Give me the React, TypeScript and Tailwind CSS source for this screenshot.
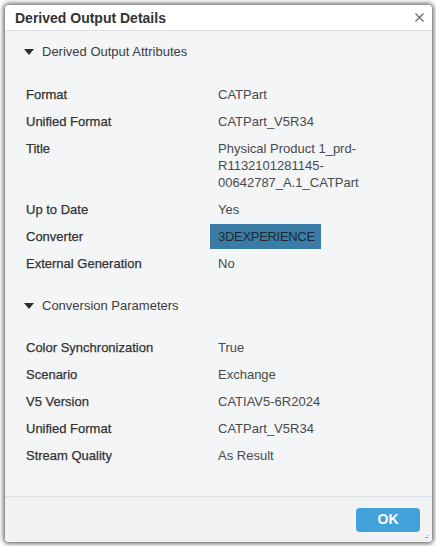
import React from "react";

type Row = { label: string; value: React.ReactNode };

const attributes: Row[] = [
  { label: "Format", value: "CATPart" },
  { label: "Unified Format", value: "CATPart_V5R34" },
  {
    label: "Title",
    value: (
      <>
        Physical Product 1_prd-
        <br />
        R1132101281145-
        <br />
        00642787_A.1_CATPart
      </>
    ),
  },
  { label: "Up to Date", value: "Yes" },
  {
    label: "Converter",
    value: (
      <span className="-ml-2 inline-block w-[111px] whitespace-nowrap bg-[#3a7ca5] py-1 pl-2 tracking-[-0.3px] text-[#1b2a36]">
        3DEXPERIENCE
      </span>
    ),
  },
  { label: "External Generation", value: "No" },
];

const parameters: Row[] = [
  { label: "Color Synchronization", value: "True" },
  { label: "Scenario", value: "Exchange" },
  { label: "V5 Version", value: "CATIAV5-6R2024" },
  { label: "Unified Format", value: "CATPart_V5R34" },
  { label: "Stream Quality", value: "As Result" },
];

function SectionHeader({ title }: { title: string }) {
  return (
    <div className="flex h-6 items-center pl-[19px] text-[13px] text-[#3d3d3d]">
      <svg width="10" height="6" viewBox="0 0 10 6" className="mr-2">
        <path d="M0 0 L10 0 L5 6 Z" fill="#2f2f2f" />
      </svg>
      {title}
    </div>
  );
}

function Rows({ rows }: { rows: Row[] }) {
  return (
    <div className="flex flex-col">
      {rows.map((r) => (
        <div key={r.label} className={`flex items-start ${r.label === "Converter" ? "py-[1px]" : "py-[5px]"} text-[13px] leading-[17px]`}>
          <div className={`w-[213px] shrink-0 pl-[21px] text-[#333] [-webkit-text-stroke:0.25px_#333] ${r.label === "Converter" ? "py-1" : ""}`}>
            {r.label}
          </div>
          <div className="text-[#4a4a4a]">{r.value}</div>
        </div>
      ))}
    </div>
  );
}

export default function App() {
  return (
    <div className="h-[546px] w-[436px] bg-white p-[5px] font-['Liberation_Sans',Arial,sans-serif]">
      <div className="relative flex h-[537px] w-[427px] flex-col overflow-hidden rounded-[4px] bg-[#f3f5f7] shadow-[0_0_4px_2px_rgba(0,0,0,0.55)]">
        <div className="flex h-[26px] shrink-0 items-center justify-between border-b border-[#dcdfe3] bg-white pl-[10px] pr-[8px]">
          <span className="pt-[1px] text-[14px] font-bold text-[#333]">Derived Output Details</span>
          <svg width="9" height="9" viewBox="0 0 9 9">
            <path d="M0.5 0.5 L8.5 8.5 M8.5 0.5 L0.5 8.5" stroke="#6f6f6f" strokeWidth="1.4" />
          </svg>
        </div>
        <div className="flex-1 pt-[9px]">
          <SectionHeader title="Derived Output Attributes" />
          <div className="mt-[17px]">
            <Rows rows={attributes} />
          </div>
          <div className="mt-[17px]">
            <SectionHeader title="Conversion Parameters" />
          </div>
          <div className="mt-4">
            <Rows rows={parameters} />
          </div>
        </div>
        <div className="flex h-[46px] shrink-0 items-center justify-end border-t border-[#dcdfe3] bg-[#f1f2f3] pr-3">
          <button className="h-6 w-16 rounded-[4px] bg-[#42a2da] text-[14px] font-bold text-white">OK</button>
        </div>
        <div className="absolute bottom-[4px] right-[4px] flex flex-col items-end gap-[1px]">
          <span className="h-[1px] w-[1px] bg-[#999]" />
          <span className="h-[1px] w-[3px] bg-[#999]" />
        </div>
      </div>
    </div>
  );
}
